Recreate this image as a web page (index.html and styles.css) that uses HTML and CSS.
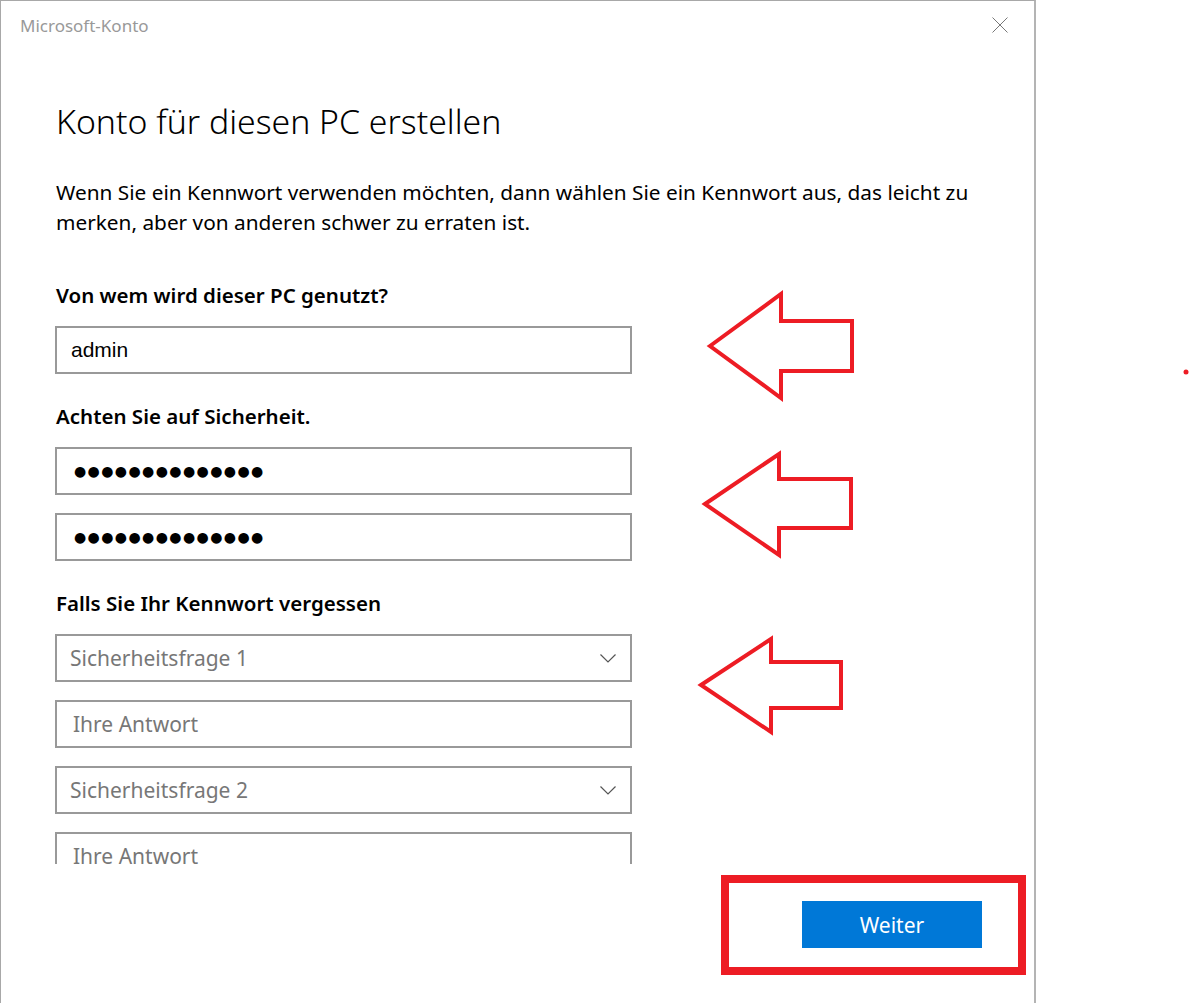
FILE: index.html
```html
<!DOCTYPE html>
<html lang="de">
<head>
  <meta charset="UTF-8">
  <meta name="viewport" content="width=device-width, initial-scale=1.0">
  <title>Microsoft-Konto</title>
  <link rel="stylesheet" href="styles.css">
</head>
<body>
  <div class="window">
    <div class="titlebar">
      <span class="title">Microsoft-Konto</span>
      <svg class="close" width="16" height="16" viewBox="0 0 16 16">
        <path d="M0.5 0.5L15.5 15.5M15.5 0.5L0.5 15.5" />
      </svg>
    </div>
    <div class="scroll">
      <h1>Konto für diesen PC erstellen</h1>
      <p class="intro">Wenn Sie ein Kennwort verwenden möchten, dann wählen Sie ein Kennwort aus, das leicht zu merken, aber von anderen schwer zu erraten ist.</p>

      <div class="label">Von wem wird dieser PC genutzt?</div>
      <div class="field"><span class="value">admin</span></div>

      <div class="label">Achten Sie auf Sicherheit.</div>
      <div class="field"><span class="dots">●●●●●●●●●●●●●●</span></div>
      <div class="field"><span class="dots">●●●●●●●●●●●●●●</span></div>

      <div class="label">Falls Sie Ihr Kennwort vergessen</div>
      <div class="field select">
        <span class="placeholder">Sicherheitsfrage 1</span>
        <svg class="chevron" width="16" height="9" viewBox="0 0 16 9"><path d="M0.5 0.5L8 8L15.5 0.5" /></svg>
      </div>
      <div class="field"><span class="placeholder answer">Ihre Antwort</span></div>
      <div class="field select">
        <span class="placeholder">Sicherheitsfrage 2</span>
        <svg class="chevron" width="16" height="9" viewBox="0 0 16 9"><path d="M0.5 0.5L8 8L15.5 0.5" /></svg>
      </div>
      <div class="field"><span class="placeholder answer">Ihre Antwort</span></div>
    </div>
    <div class="footer">
      <button class="primary">Weiter</button>
    </div>
  </div>

  <!-- red annotations drawn over the screenshot -->
  <svg class="marks" width="1190" height="1003" viewBox="0 0 1190 1003">
    <g fill="none" stroke="#ed1c24" stroke-width="4" stroke-linejoin="miter">
      <polygon points="710,346 781,294 781,321 852,321 852,371 781,371 781,398" />
      <polygon points="705,504 779,454 779,479 851,479 851,528 779,528 779,555" />
      <polygon points="701,685 771,639 771,662 841,662 841,708 771,708 771,732" />
    </g>
    <rect x="725" y="879" width="297" height="92" fill="none" stroke="#ed1c24" stroke-width="8" />
    <circle cx="1186" cy="372" r="2.5" fill="#ed1c24" />
  </svg>
</body>
</html>
```

FILE: styles.css
```css
body {
  margin: 0;
  background: white;
  font-family: "Noto Sans", "Open Sans", sans-serif;
  color: black;
}
.window {
  width: 1036px;
  height: 1003px;
  box-sizing: border-box;
  border-top: 1px solid #a8a8a8;
  border-left: 1px solid #a8a8a8;
  border-right: 2px solid #b4b4b4;
  background: white;
  display: flex;
  flex-direction: column;
}
.titlebar {
  height: 51px;
  display: flex;
  align-items: center;
  justify-content: space-between;
  padding: 0 26px 0 19px;
  flex-shrink: 0;
}
.title {
  font-size: 17px;
  color: #999;
  margin-top: -2px;
}
.close {
  margin-top: -4px;
}
.close path {
  stroke: #777;
  stroke-width: 1;
  fill: none;
}
.scroll {
  height: 812px;
  overflow: hidden;
  padding-left: 54px;
  flex-shrink: 0;
}
h1 {
  font-size: 33.8px;
  font-weight: 300;
  margin: 46px 0 0 1px;
  line-height: 46px;
}
.intro {
  font-size: 20.8px;
  line-height: 30px;
  margin: 33px 0 0 1px;
  width: 930px;
}
.label {
  font-size: 20.5px;
  font-weight: 600;
  line-height: 28px;
  margin: 44px 0 17px 1px;
}
.field {
  width: 577px;
  height: 48px;
  box-sizing: border-box;
  border: 2px solid #999;
  display: flex;
  align-items: center;
  padding: 0 14px;
  margin-bottom: 18px;
}
.field + .label {
  margin-top: 28px;
}
.value {
  font-family: "Liberation Sans", Arial, sans-serif;
  font-size: 21px;
}
.dots {
  font-family: "DejaVu Sans", sans-serif;
  font-size: 14px;
  letter-spacing: 1.4px;
  padding-left: 3px;
}
.select {
  justify-content: space-between;
  padding-right: 14px;
  padding-left: 13px;
}
.placeholder {
  font-size: 21px;
  color: #777;
}
.answer {
  padding-left: 2px;
}
.chevron path {
  stroke: #555;
  stroke-width: 1.2;
  fill: none;
}
.footer {
  flex: 1;
  display: flex;
  justify-content: flex-end;
  align-items: flex-start;
  padding: 37px 52px 0 0;
}
.primary {
  width: 180px;
  height: 47px;
  border: none;
  background: #0078d7;
  color: white;
  font-family: "Noto Sans", "Open Sans", sans-serif;
  font-size: 21px;
}
.marks {
  position: absolute;
  top: 0;
  left: 0;
  pointer-events: none;
}
```
